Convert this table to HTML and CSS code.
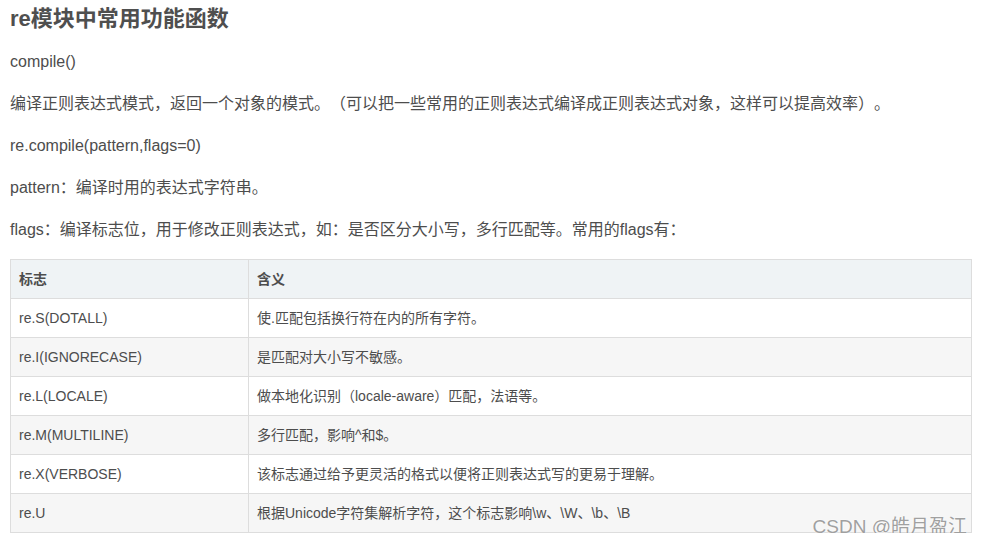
FILE: index.html
```html
<!DOCTYPE html>
<html lang="zh-CN">
<head>
<meta charset="utf-8">
<title>re模块中常用功能函数</title>
<link rel="stylesheet" href="styles.css">
</head>
<body>
<article class="article">
  <h3 class="title">re模块中常用功能函数</h3>
  <p class="para">compile()</p>
  <p class="para">编译正则表达式模式，返回一个对象的模式。（可以把一些常用的正则表达式编译成正则表达式对象，这样可以提高效率）。</p>
  <p class="para">re.compile(pattern,flags=0)</p>
  <p class="para">pattern：编译时用的表达式字符串。</p>
  <p class="para">flags：编译标志位，用于修改正则表达式，如：是否区分大小写，多行匹配等。常用的flags有：</p>
  <div class="table-wrap">
    <table class="flags">
      <thead>
        <tr><th class="col-flag">标志</th><th>含义</th></tr>
      </thead>
      <tbody>
        <tr><td>re.S(DOTALL)</td><td>使.匹配包括换行符在内的所有字符。</td></tr>
        <tr><td>re.I(IGNORECASE)</td><td>是匹配对大小写不敏感。</td></tr>
        <tr><td>re.L(LOCALE)</td><td>做本地化识别（locale-aware）匹配，法语等。</td></tr>
        <tr><td>re.M(MULTILINE)</td><td>多行匹配，影响^和$。</td></tr>
        <tr><td>re.X(VERBOSE)</td><td>该标志通过给予更灵活的格式以便将正则表达式写的更易于理解。</td></tr>
        <tr><td>re.U</td><td>根据Unicode字符集解析字符，这个标志影响\w、\W、\b、\B</td></tr>
      </tbody>
    </table>
    <div class="watermark">CSDN @皓月盈江</div>
  </div>
</article>
</body>
</html>
```

FILE: styles.css
```css
html, body {
  margin: 0;
  padding: 0;
  background: #ffffff;
}

body {
  font-family: "Liberation Sans", Arial, "Noto Sans CJK SC", sans-serif;
  color: #4d4d4d;
  text-spacing-trim: space-all;
}

.article {
  padding: 4px 10px 0 10px;
  width: 962px;
}

.title {
  margin: 0 0 15px 0;
  font-size: 22px;
  line-height: 30px;
  font-weight: 700;
  color: #4f4f4f;
}

.para {
  margin: 0 0 16px 0;
  font-size: 16px;
  line-height: 26px;
  color: #4d4d4d;
}

.table-wrap {
  position: relative;
  margin-top: 0;
}

.flags {
  width: 962px;
  border-collapse: collapse;
  font-size: 14px;
  color: #4d4d4d;
}

.flags th,
.flags td {
  border: 1px solid #dddddd;
  padding: 8px;
  line-height: 22px;
  text-align: left;
  vertical-align: middle;
}

.flags th {
  background: #eff3f5;
  font-weight: 700;
}

.flags .col-flag {
  width: 221px;
}

.flags tbody tr:nth-child(even) td {
  background: #f6f6f6;
}

.watermark {
  position: absolute;
  right: 5px;
  bottom: -6px;
  font-size: 19px;
  line-height: 24px;
  color: #a0a0a0;
  text-shadow: 0 0 1px #ffffff, 0 0 2px #ffffff;
  white-space: nowrap;
}
```
